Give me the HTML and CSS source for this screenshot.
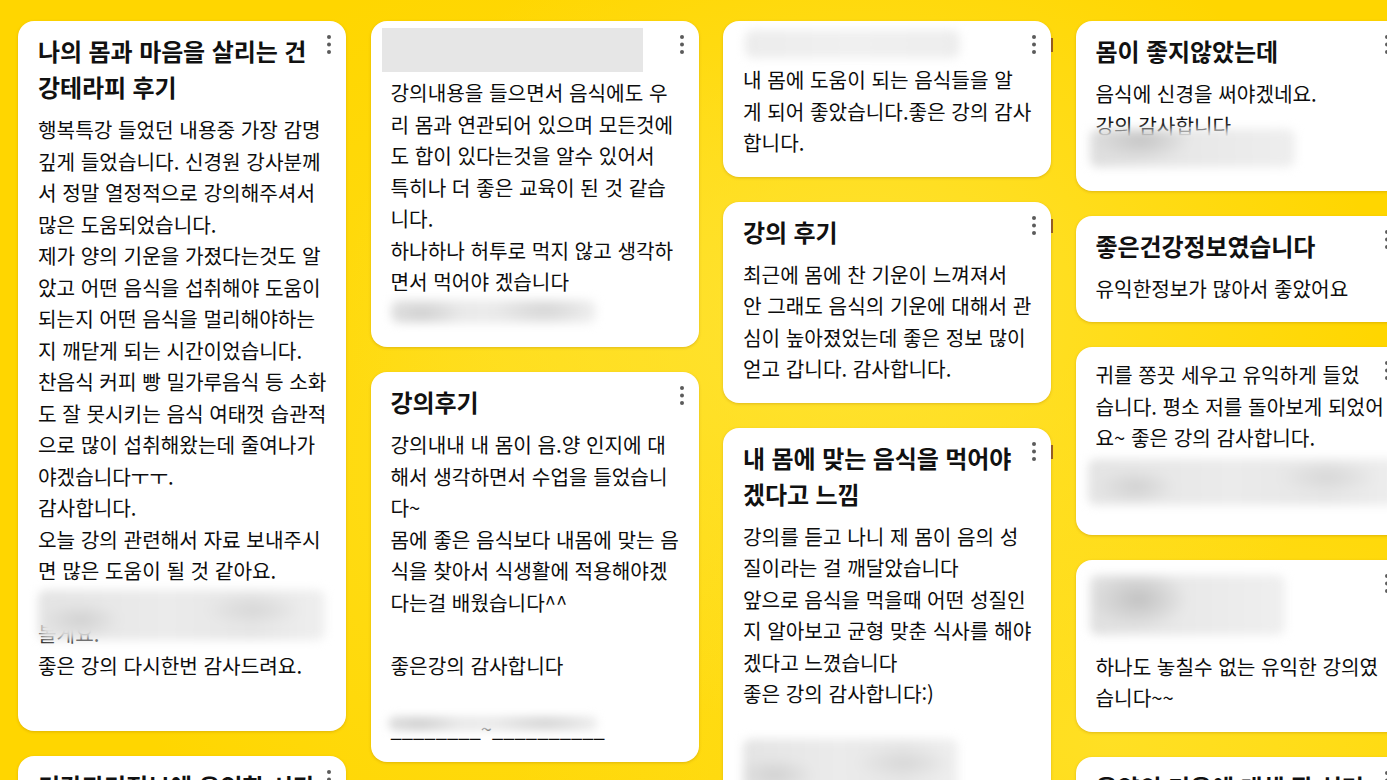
FILE: index.html
```html
<!DOCTYPE html>
<html lang="ko">
<head>
<meta charset="utf-8">
<title>강의 후기</title>
<link rel="stylesheet" href="styles.css">
</head>
<body>
<main class="board">
  <section class="column">
    <article class="card">
      <svg class="kebab" viewBox="0 0 4 20" width="4" height="20"><circle cx="2" cy="2" r="2"/><circle cx="2" cy="9.5" r="2"/><circle cx="2" cy="17" r="2"/></svg>
      <h2 class="title">나의 몸과 마음을 살리는 건<br>강테라피 후기</h2>
      <p class="body">행복특강 들었던 내용중 가장 감명<br>깊게 들었습니다. 신경원 강사분께<br>서 정말 열정적으로 강의해주셔서<br>많은 도움되었습니다.<br>제가 양의 기운을 가졌다는것도 알<br>았고 어떤 음식을 섭취해야 도움이<br>되는지 어떤 음식을 멀리해야하는<br>지 깨닫게 되는 시간이었습니다.<br>찬음식 커피 빵 밀가루음식 등 소화<br>도 잘 못시키는 음식 여태껏 습관적<br>으로 많이 섭취해왔는데 줄여나가<br>야겠습니다ㅜㅜ.<br>감사합니다.<br>오늘 강의 관련해서 자료 보내주시<br>면 많은 도움이 될 것 같아요.</p>
      <div class="redact">
        <p class="body">&nbsp;<br>볼게요.</p>
        <div class="smudge sm-a1"></div>
      </div>
      <p class="body">좋은 강의 다시한번 감사드려요.<br>&nbsp;</p>
    </article>
    <article class="card">
      <svg class="kebab" viewBox="0 0 4 20" width="4" height="20"><circle cx="2" cy="2" r="2"/><circle cx="2" cy="9.5" r="2"/><circle cx="2" cy="17" r="2"/></svg>
      <h2 class="title">건강관리정보에 유익한 시간이였<br>습니다</h2>
      <p class="body">좋은 강의 감사합니다.</p>
    </article>
  </section>

  <section class="column">
    <article class="card">
      <svg class="kebab" viewBox="0 0 4 20" width="4" height="20"><circle cx="2" cy="2" r="2"/><circle cx="2" cy="9.5" r="2"/><circle cx="2" cy="17" r="2"/></svg>
      <div class="cover"></div>
      <p class="body">강의내용을 들으면서 음식에도 우<br>리 몸과 연관되어 있으며 모든것에<br>도 합이 있다는것을 알수 있어서<br>특히나 더 좋은 교육이 된 것 같습<br>니다.<br>하나하나 허투로 먹지 않고 생각하<br>면서 먹어야 겠습니다</p>
      <div class="smudge sm-c1"></div>
    </article>
    <article class="card">
      <svg class="kebab" viewBox="0 0 4 20" width="4" height="20"><circle cx="2" cy="2" r="2"/><circle cx="2" cy="9.5" r="2"/><circle cx="2" cy="17" r="2"/></svg>
      <h2 class="title">강의후기</h2>
      <p class="body">강의내내 내 몸이 음.양 인지에 대<br>해서 생각하면서 수업을 들었습니<br>다~<br>몸에 좋은 음식보다 내몸에 맞는 음<br>식을 찾아서 식생활에 적용해야겠<br>다는걸 배웠습니다^^<br>&nbsp;<br>좋은강의 감사합니다<br>&nbsp;</p>
      <div class="redact">
        <p class="body">________~__________</p>
        <div class="smudge sm-c2"></div>
      </div>
    </article>
  </section>

  <section class="column">
    <article class="card">
      <svg class="kebab" viewBox="0 0 4 20" width="4" height="20"><circle cx="2" cy="2" r="2"/><circle cx="2" cy="9.5" r="2"/><circle cx="2" cy="17" r="2"/></svg>
      <span class="edge-mark"></span>
      <div class="smudge sm-e1"></div>
      <p class="body">내 몸에 도움이 되는 음식들을 알<br>게 되어 좋았습니다.좋은 강의 감사<br>합니다.</p>
    </article>
    <article class="card">
      <svg class="kebab" viewBox="0 0 4 20" width="4" height="20"><circle cx="2" cy="2" r="2"/><circle cx="2" cy="9.5" r="2"/><circle cx="2" cy="17" r="2"/></svg>
      <span class="edge-mark"></span>
      <h2 class="title">강의 후기</h2>
      <p class="body">최근에 몸에 찬 기운이 느껴져서<br>안 그래도 음식의 기운에 대해서 관<br>심이 높아졌었는데 좋은 정보 많이<br>얻고 갑니다. 감사합니다.</p>
    </article>
    <article class="card">
      <svg class="kebab" viewBox="0 0 4 20" width="4" height="20"><circle cx="2" cy="2" r="2"/><circle cx="2" cy="9.5" r="2"/><circle cx="2" cy="17" r="2"/></svg>
      <span class="edge-mark"></span>
      <h2 class="title">내 몸에 맞는 음식을 먹어야<br>겠다고 느낌</h2>
      <p class="body">강의를 듣고 나니 제 몸이 음의 성<br>질이라는 걸 깨달았습니다<br>앞으로 음식을 먹을때 어떤 성질인<br>지 알아보고 균형 맞춘 식사를 해야<br>겠다고 느꼈습니다<br>좋은 강의 감사합니다:)</p>
      <div class="smudge sm-g1"></div>
    </article>
  </section>

  <section class="column">
    <article class="card">
      <svg class="kebab" viewBox="0 0 4 20" width="4" height="20"><circle cx="2" cy="2" r="2"/><circle cx="2" cy="9.5" r="2"/><circle cx="2" cy="17" r="2"/></svg>
      <h2 class="title">몸이 좋지않았는데</h2>
      <p class="body">음식에 신경을 써야겠네요.</p>
      <div class="redact">
        <p class="body">강의 감사합니다<br>&nbsp;</p>
        <div class="smudge sm-h1"></div>
      </div>
    </article>
    <article class="card">
      <svg class="kebab" viewBox="0 0 4 20" width="4" height="20"><circle cx="2" cy="2" r="2"/><circle cx="2" cy="9.5" r="2"/><circle cx="2" cy="17" r="2"/></svg>
      <h2 class="title">좋은건강정보였습니다</h2>
      <p class="body">유익한정보가 많아서 좋았어요</p>
    </article>
    <article class="card">
      <svg class="kebab" viewBox="0 0 4 20" width="4" height="20"><circle cx="2" cy="2" r="2"/><circle cx="2" cy="9.5" r="2"/><circle cx="2" cy="17" r="2"/></svg>
      <p class="body">귀를 쫑끗 세우고 유익하게 들었<br>습니다. 평소 저를 돌아보게 되었어<br>요~ 좋은 강의 감사합니다.</p>
      <div class="smudge sm-j1"></div>
    </article>
    <article class="card">
      <svg class="kebab" viewBox="0 0 4 20" width="4" height="20"><circle cx="2" cy="2" r="2"/><circle cx="2" cy="9.5" r="2"/><circle cx="2" cy="17" r="2"/></svg>
      <div class="smudge sm-k1"></div>
      <p class="body">하나도 놓칠수 없는 유익한 강의였<br>습니다~~</p>
    </article>
    <article class="card">
      <svg class="kebab" viewBox="0 0 4 20" width="4" height="20"><circle cx="2" cy="2" r="2"/><circle cx="2" cy="9.5" r="2"/><circle cx="2" cy="17" r="2"/></svg>
      <h2 class="title">음양의 기운에 대해 잘 설명<br>해주셔서 좋았습니다</h2>
      <p class="body">감사합니다.</p>
    </article>
  </section>
</main>
</body>
</html>
```

FILE: styles.css
```css
html, body {
  margin: 0;
  height: 100%;
  overflow: hidden;
}

body {
  font-family: "Noto Sans CJK KR", "Noto Sans", sans-serif;
  color: #111;
  background:
    radial-gradient(ellipse 520px 420px at 62% 40%, rgba(255, 232, 70, 0.75), rgba(255, 232, 70, 0) 100%),
    radial-gradient(ellipse 600px 380px at 80% 95%, rgba(255, 230, 60, 0.6), rgba(255, 230, 60, 0) 100%),
    radial-gradient(ellipse 400px 500px at 35% 60%, rgba(255, 228, 50, 0.5), rgba(255, 228, 50, 0) 100%),
    #ffd600;
}

.board {
  display: grid;
  grid-template-columns: repeat(4, 328px);
  column-gap: 24.5px;
  align-items: start;
  padding: 21px 0 0 18px;
}

.column {
  display: flex;
  flex-direction: column;
  gap: 25px;
}

.card {
  position: relative;
  background: #fff;
  border-radius: 16px;
  padding: 12px 12px 18px 20px;
  box-shadow: 0 1px 3px rgba(150, 100, 0, 0.3);
}

.kebab {
  position: absolute;
  top: 14px;
  right: 15px;
  fill: #5b5b5b;
}

.edge-mark {
  position: absolute;
  top: 17px;
  right: -2px;
  width: 2px;
  height: 14px;
  background: #6b2a2a;
  opacity: 0.7;
}

.title {
  margin: 0 0 9px;
  padding-right: 12px;
  font-size: 24px;
  line-height: 36px;
  font-weight: 700;
  color: #111;
  letter-spacing: -0.1px;
}

.body {
  margin: 0;
  font-size: 20.2px;
  line-height: 31.5px;
  font-weight: 400;
  color: #0d0d0d;
}

.cover {
  height: 44px;
  width: 261px;
  margin: -5px 0 5px -8.5px;
  background: #e6e6e6;
}

.redact {
  position: relative;
}

.smudge {
  border-radius: 8px;
  filter: blur(5px);
  background:
    radial-gradient(ellipse 40px 18px at 15% 60%, rgba(200, 200, 200, 0.7), rgba(200, 200, 200, 0)),
    radial-gradient(ellipse 50px 16px at 75% 40%, rgba(205, 205, 205, 0.6), rgba(205, 205, 205, 0)),
    linear-gradient(90deg, #e4e4e4 0%, #ebebeb 45%, #e6e6e6 75%, #efefef 100%);
}

.redact .smudge {
  position: absolute;
}

.sm-a1 {
  top: 3px;
  left: 0;
  width: 287px;
  height: 50px;
}

.sm-c1 {
  width: 205px;
  height: 23px;
  margin: 2.5px 0 6px 0;
}

.sm-c2 {
  top: 3px;
  left: -3px;
  width: 210px;
  height: 15px;
  filter: blur(4px);
}

.sm-e1 {
  width: 215px;
  height: 28px;
  margin: -3px 0 6px 2px;
  background: linear-gradient(90deg, #ececec, #f0f0f0 50%, #ededed);
}

.sm-g1 {
  width: 215px;
  height: 60px;
  margin: 29px 0 0 0;
}

.sm-h1 {
  top: 19px;
  left: -5.5px;
  width: 205px;
  height: 38px;
  background:
    radial-gradient(ellipse 50px 20px at 25% 30%, rgba(190, 190, 190, 0.8), rgba(190, 190, 190, 0)),
    linear-gradient(90deg, #dedede, #e8e8e8 50%, #eeeeee);
}

.sm-j1 {
  width: 320px;
  height: 46px;
  margin: 5.5px 0 11.5px -7.5px;
}

.sm-k1 {
  width: 195px;
  height: 60px;
  margin: 3px 0 16px -5.5px;
  background:
    radial-gradient(ellipse 50px 30px at 25% 40%, rgba(185, 185, 185, 0.8), rgba(185, 185, 185, 0)),
    linear-gradient(90deg, #e0e0e0, #e9e9e9 50%, #efefef);
}
```
